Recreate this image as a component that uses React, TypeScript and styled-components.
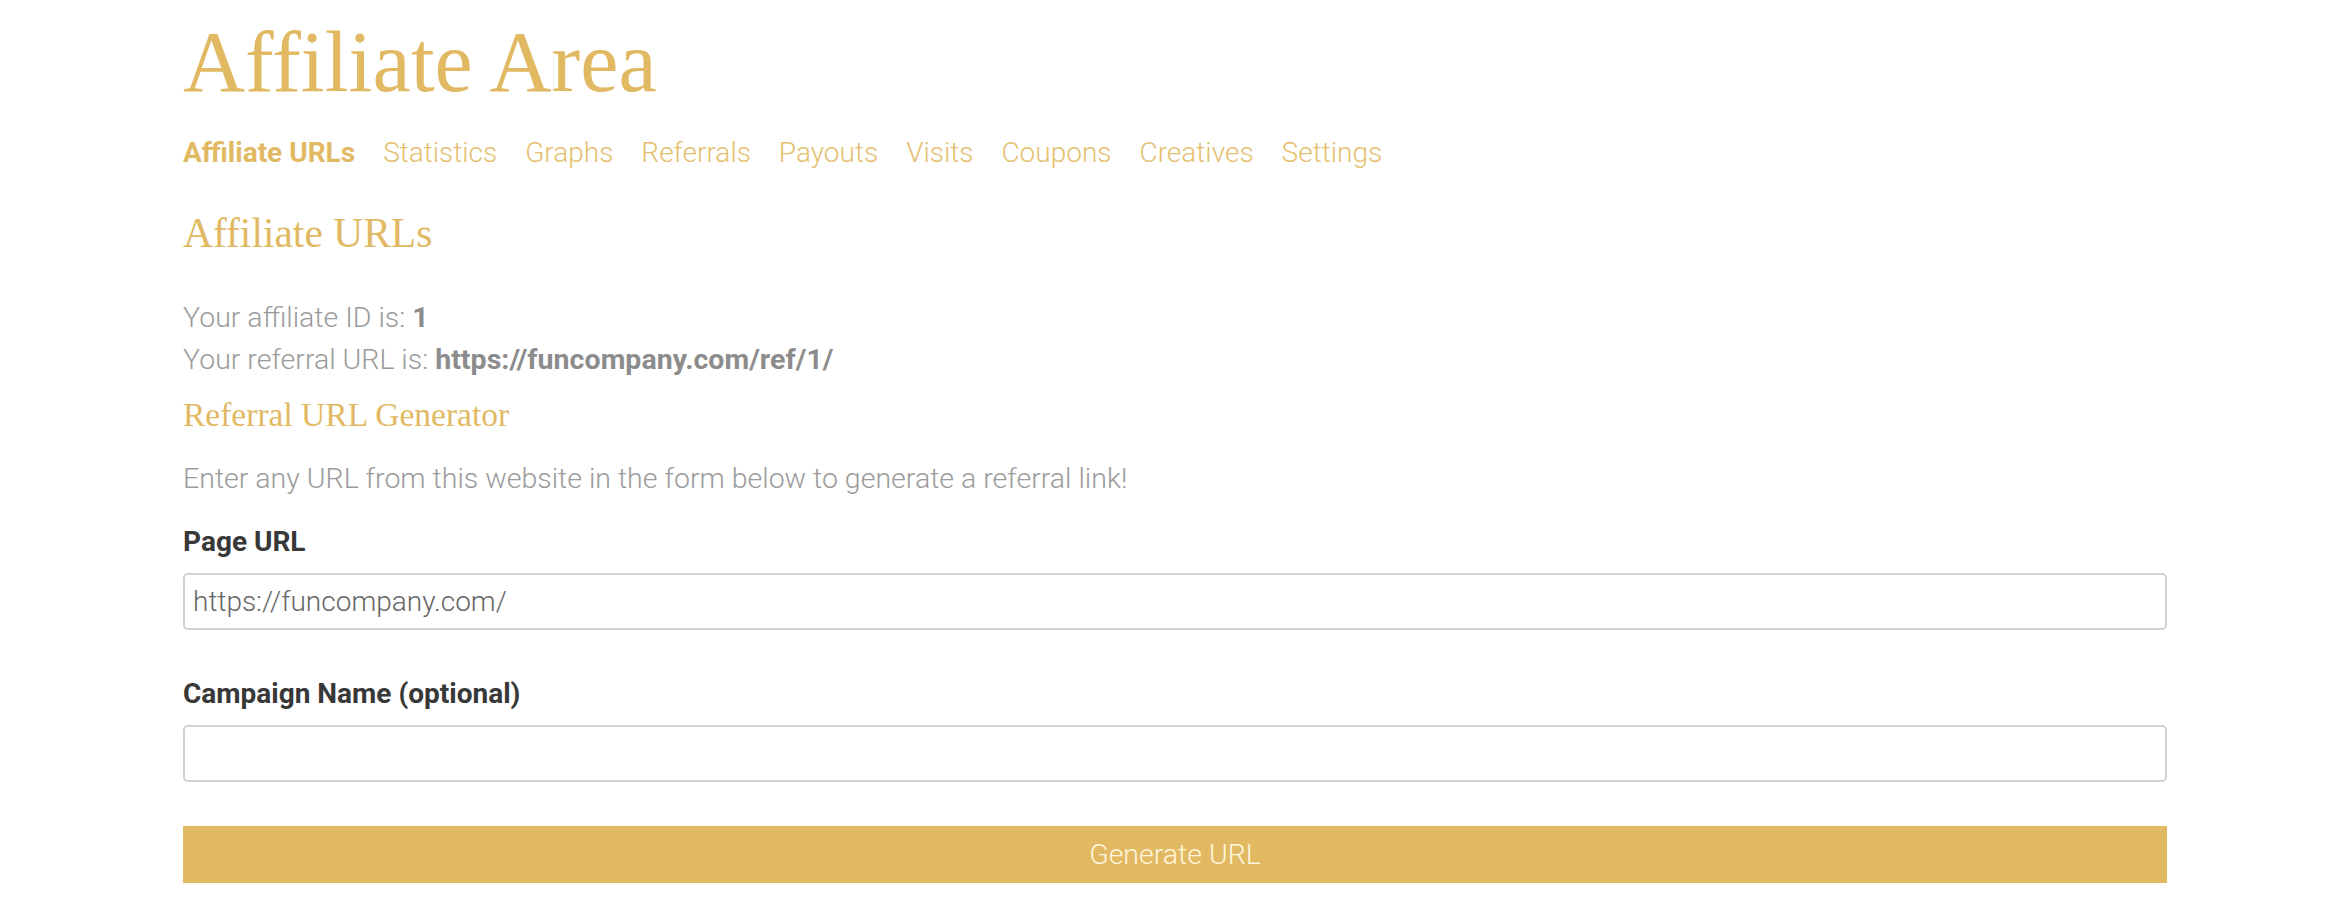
import React from 'react';
import styled, {createGlobalStyle} from 'styled-components';

const colors = {
  gold: '#e2b963',
  goldText: '#e4bf6f',
  grey: '#9b9b9b',
  greyStrong: '#8c8c8c',
  label: '#383838',
  border: '#d2d2d2',
  buttonText: '#fff5dc'
};

const SANS = `Roboto, 'Open Sans', sans-serif`;
const SERIF = `'Liberation Serif', 'DejaVu Serif', serif`;

const GlobalStyle = createGlobalStyle`
  html, body {
    margin: 0;
    padding: 0;
    background: #ffffff;
  }
  body {
    font-family: ${SANS};
    -webkit-font-smoothing: antialiased;
  }
`;

const Page = styled.div`
  width: 1984px;
  margin: 0 0 0 183px;
  padding-top: 20px;
  padding-bottom: 36px;
`;

const PageTitle = styled.h1`
  margin: 0;
  font-family: ${SERIF};
  font-weight: 400;
  font-size: 86px;
  line-height: 84px;
  color: ${colors.gold};
`;

const Tabs = styled.nav`
  display: flex;
  gap: 28px;
  margin-top: 31px;
`;

const Tab = styled.a<{$active?: boolean}>`
  font-family: ${SANS};
  font-size: 28px;
  line-height: 36px;
  font-weight: ${({$active}) => ($active ? 700 : 300)};
  color: ${({$active}) => ($active ? colors.gold : colors.goldText)};
  text-decoration: none;
  cursor: pointer;
`;

const SectionTitle = styled.h2`
  margin: 38px 0 0;
  font-family: ${SERIF};
  font-weight: 400;
  font-size: 41.5px;
  line-height: 48px;
  color: ${colors.gold};
`;

const SubTitle = styled.h3`
  margin: 14px 0 0;
  font-family: ${SERIF};
  font-weight: 400;
  font-size: 33.5px;
  line-height: 40px;
  color: ${colors.gold};
`;

const InfoBlock = styled.div`
  margin-top: 40px;
`;

const Text = styled.p<{$lineHeight?: number; $gap?: number}>`
  margin: ${({$gap}) => $gap || 0}px 0 0;
  font-family: ${SANS};
  font-size: 28.5px;
  font-weight: 300;
  line-height: ${({$lineHeight}) => $lineHeight || 40}px;
  color: ${colors.grey};

  strong {
    font-size: 28.5px;
    font-weight: 700;
    letter-spacing: 0.05px;
    color: ${colors.greyStrong};
  }
`;

const Form = styled.form`
  display: flex;
  flex-direction: column;
  margin-top: 23px;
`;

const Field = styled.div<{$spaced?: boolean}>`
  display: flex;
  flex-direction: column;
  gap: 11px;
  margin-top: ${({$spaced}) => ($spaced ? '44px' : '0')};
`;

const Label = styled.label`
  font-family: ${SANS};
  font-size: 28px;
  font-weight: 700;
  line-height: 40px;
  color: ${colors.label};
`;

const Input = styled.input`
  box-sizing: border-box;
  width: 100%;
  height: 57px;
  padding: 0 8px;
  border: 2px solid ${colors.border};
  border-radius: 5px;
  font-family: ${SANS};
  font-size: 28px;
  font-weight: 300;
  color: #666666;
  background: #ffffff;
  outline: none;
`;

const SubmitButton = styled.button`
  box-sizing: border-box;
  width: 100%;
  height: 57px;
  margin-top: 44px;
  border: none;
  border-radius: 0;
  background: ${colors.gold};
  font-family: ${SANS};
  font-size: 28.5px;
  font-weight: 300;
  color: ${colors.buttonText};
  cursor: pointer;
`;

const TABS = ['Affiliate URLs', 'Statistics', 'Graphs', 'Referrals', 'Payouts', 'Visits', 'Coupons', 'Creatives', 'Settings'];

const App = () => {
  return (
    <>
      <GlobalStyle />
      <Page>
        <PageTitle>Affiliate Area</PageTitle>
        <Tabs>
          {TABS.map((tab, i) => (
            <Tab key={tab} $active={i === 0}>
              {tab}
            </Tab>
          ))}
        </Tabs>

        <SectionTitle>Affiliate URLs</SectionTitle>

        <InfoBlock>
          <Text $lineHeight={42}>
            Your affiliate ID is: <strong>1</strong>
          </Text>
          <Text $lineHeight={42}>
            Your referral URL is: <strong>https://funcompany.com/ref/1/</strong>
          </Text>
        </InfoBlock>

        <SubTitle>Referral URL Generator</SubTitle>
        <Text $gap={24}>Enter any URL from this website in the form below to generate a referral link!</Text>

        <Form onSubmit={e => e.preventDefault()}>
          <Field>
            <Label htmlFor="page-url">Page URL</Label>
            <Input id="page-url" type="text" defaultValue="https://funcompany.com/" />
          </Field>
          <Field $spaced>
            <Label htmlFor="campaign">Campaign Name (optional)</Label>
            <Input id="campaign" type="text" />
          </Field>
          <SubmitButton type="submit">Generate URL</SubmitButton>
        </Form>
      </Page>
    </>
  );
};

export default App;
